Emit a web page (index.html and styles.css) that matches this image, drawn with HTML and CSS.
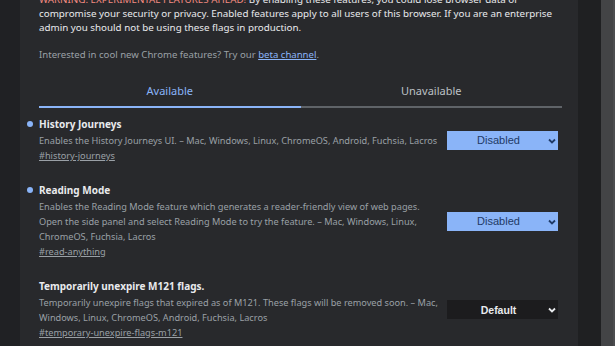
FILE: index.html
```html
<!DOCTYPE html>
<html lang="en">

<head>
    <meta charset="UTF-8">
    <meta name="viewport" content="width=device-width, initial-scale=1.0">
    <title>Experiments</title>
    <link rel="stylesheet" href="styles.css">
</head>

<body>
    <div class="page">
        <main class="panel">
            <p class="warning">
                <span class="warning-title">WARNING: EXPERIMENTAL FEATURES AHEAD!</span> By enabling these features, you could lose browser data or<br>
                compromise your security or privacy. Enabled features apply to all users of this browser. If you are an enterprise<br>
                admin you should not be using these flags in production.
            </p>
            <p class="promo">Interested in cool new Chrome features? Try our <a href="#">beta channel</a>.</p>

            <div class="tabs">
                <div class="tab active">Available</div>
                <div class="tab">Unavailable</div>
            </div>

            <div class="flags">
                <div class="flag modified">
                    <div class="flag-text">
                        <h3>History Journeys</h3>
                        <p>Enables the History Journeys UI. – Mac, Windows, Linux, ChromeOS, Android, Fuchsia, Lacros</p>
                        <a href="#">#history-journeys</a>
                    </div>
                    <div class="select select-on">
                        <span>Disabled</span>
                        <svg width="8" height="6" viewBox="0 0 8 6"><path d="M1 1.5 L4 4.5 L7 1.5" /></svg>
                    </div>
                </div>

                <div class="flag modified">
                    <div class="flag-text">
                        <h3>Reading Mode</h3>
                        <p>Enables the Reading Mode feature which generates a reader-friendly view of web pages. Open the side panel and select Reading Mode to try the feature. – Mac, Windows, Linux, ChromeOS, Fuchsia, Lacros</p>
                        <a href="#">#read-anything</a>
                    </div>
                    <div class="select select-on">
                        <span>Disabled</span>
                        <svg width="8" height="6" viewBox="0 0 8 6"><path d="M1 1.5 L4 4.5 L7 1.5" /></svg>
                    </div>
                </div>

                <div class="flag">
                    <div class="flag-text">
                        <h3>Temporarily unexpire M121 flags.</h3>
                        <p>Temporarily unexpire flags that expired as of M121. These flags will be removed soon. – Mac, Windows, Linux, ChromeOS, Android, Fuchsia, Lacros</p>
                        <a href="#">#temporary-unexpire-flags-m121</a>
                    </div>
                    <div class="select">
                        <span>Default</span>
                        <svg width="8" height="6" viewBox="0 0 8 6"><path d="M1 1.5 L4 4.5 L7 1.5" /></svg>
                    </div>
                </div>
            </div>
        </main>
        <div class="gutter"></div>
        <div class="scrollbar"></div>
    </div>
</body>

</html>
```

FILE: styles.css
```css
body {
    font-family: "Noto Sans", "Open Sans", sans-serif;
    margin: 0;
    padding: 0;
    background: #202124;
    color: #e8eaed;
    overflow: hidden;
}

.page {
    display: flex;
    height: 346px;
    padding-left: 20px;
}

.panel {
    width: 539px;
    padding: 0 0 0 19px;
    background: #28292c;
}

.gutter {
    width: 23px;
    background: #1f2022;
}

.scrollbar {
    width: 12px;
    background: #434446;
    border-right: 2px solid #4c4d4f;
}

.warning {
    width: 530px;
    margin: -7px 0 0;
    font-size: 9.8px;
    line-height: 14px;
    white-space: nowrap;
    color: #e8eaed;
}

.warning-title {
    color: #f28b82;
}

.promo {
    margin: 13px 0 0;
    font-size: 9.6px;
    line-height: 14px;
    color: #9aa0a6;
}

.promo a {
    color: #8ab4f8;
}

.tabs {
    display: flex;
    width: 523px;
    margin-top: 22px;
}

.tab {
    flex: 1;
    text-align: center;
    font-size: 11px;
    line-height: 14px;
    padding-bottom: 8px;
    color: #bdc1c6;
    border-bottom: 2px solid #5f6368;
}

.tab.active {
    color: #8ab4f8;
    border-bottom-color: #8ab4f8;
}

.flags {
    width: 519px;
    padding-top: 9px;
}

.flag {
    display: flex;
    align-items: center;
    position: relative;
    margin-bottom: 20px;
}

.flag.modified::before {
    content: "";
    position: absolute;
    left: -12px;
    top: 4px;
    width: 6px;
    height: 6px;
    border-radius: 50%;
    background: #8ab4f8;
}

.flag-text {
    flex: 1;
    min-width: 0;
    padding-right: 8px;
}

.flag h3 {
    margin: 0;
    font-size: 10px;
    line-height: 15px;
    font-weight: bold;
    color: #e8eaed;
}

.flag p {
    margin: 1px 0 0;
    font-size: 9.2px;
    line-height: 15px;
    color: #9aa0a6;
}

.flag a {
    display: block;
    font-size: 9.2px;
    line-height: 15px;
    color: #9aa0a6;
}

.select {
    flex: none;
    width: 111px;
    height: 19px;
    display: flex;
    align-items: center;
    justify-content: center;
    position: relative;
    background: #1c1c1e;
    color: #e8eaed;
    font-family: "Liberation Sans", Arial, sans-serif;
    font-size: 10.5px;
    font-weight: bold;
}

.select span {
    margin-right: 8px;
}

.select svg {
    position: absolute;
    right: 2px;
    top: 7px;
    fill: none;
    stroke: #e8eaed;
    stroke-width: 1.8;
}

.select-on {
    background: #8ab4f8;
    color: #1f3a66;
    font-size: 11px;
    font-weight: normal;
}

.select-on svg {
    stroke: #1f3a66;
}
```
